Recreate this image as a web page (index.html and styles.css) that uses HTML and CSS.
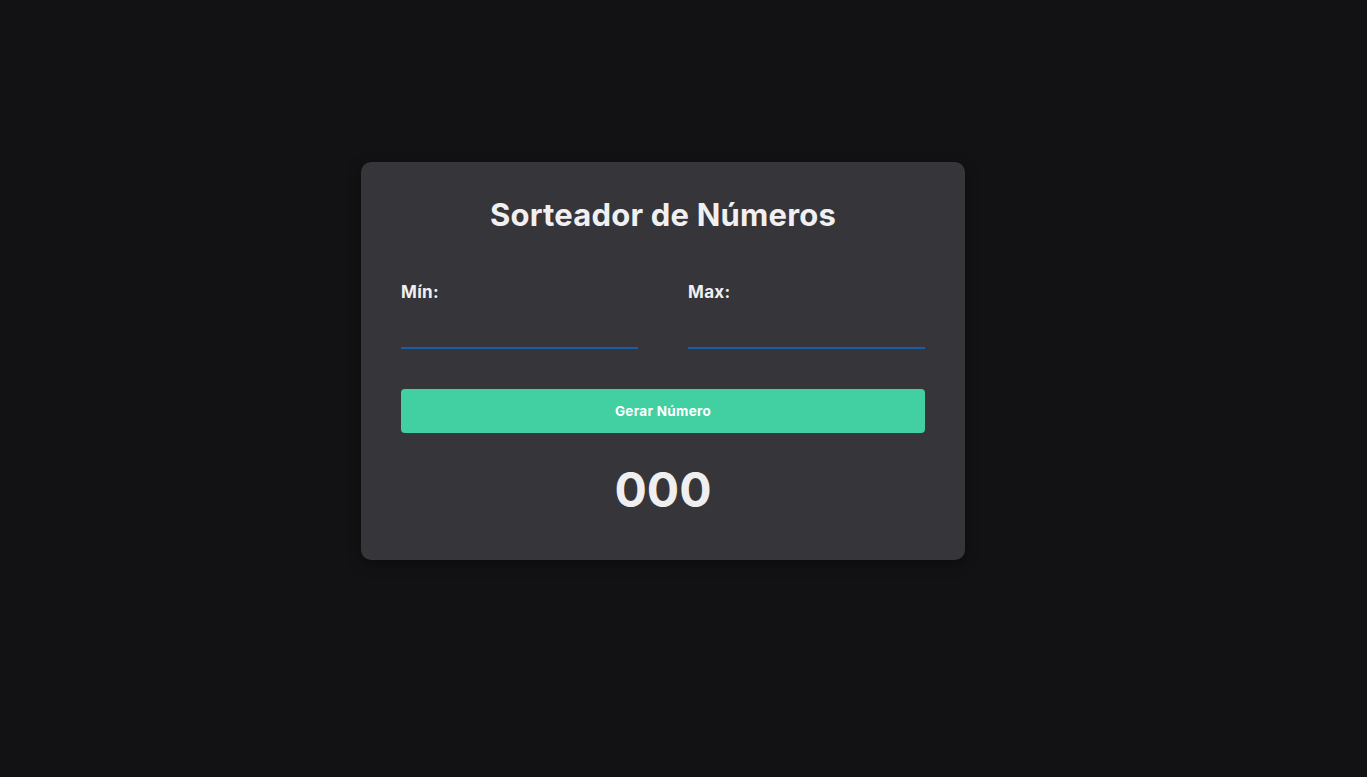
FILE: index.html
```html
<!DOCTYPE html>
<html lang="pt-BR">
<head>
<meta charset="utf-8">
<title>Sorteador de Números</title>
<link rel="stylesheet" href="styles.css">
</head>
<body>
<main class="page">
  <section class="card">
    <h1 class="title">Sorteador de Números</h1>
    <div class="fields">
      <div class="field">
        <label class="label" for="min">Mín:</label>
        <input class="input" id="min" type="number">
      </div>
      <div class="field">
        <label class="label" for="max">Max:</label>
        <input class="input" id="max" type="number">
      </div>
    </div>
    <button class="button" type="button">Gerar Número</button>
    <p class="result">000</p>
  </section>
</main>
</body>
</html>
```

FILE: styles.css
```css
* { box-sizing: border-box; }
html, body { margin: 0; padding: 0; }
body {
  background: #121214;
  font-family: "Inter", "Liberation Sans", sans-serif;
  color: #f0f0f2;
  min-height: 777px;
}
.page {
  display: flex;
  justify-content: center;
  padding-top: 162px;
  padding-right: 41px;
}
.card {
  width: 604px;
  background: #36353a;
  border-radius: 10px;
  padding: 35px 40px 40px;
  box-shadow: 0 4px 14px rgba(0, 0, 0, 0.35);
  display: flex;
  flex-direction: column;
}
.title {
  margin: 0;
  font-size: 31px;
  line-height: 36px;
  font-weight: 700;
  text-align: center;
  color: #f0f0f2;
  letter-spacing: 0.2px;
}
.fields {
  display: grid;
  grid-template-columns: 237px 237px;
  column-gap: 50px;
  margin-top: 47px;
}
.field {
  display: flex;
  flex-direction: column;
}
.label {
  font-size: 17px;
  line-height: 24px;
  font-weight: 700;
  color: #f0f0f2;
  letter-spacing: 0.3px;
}
.input {
  margin-top: 23px;
  height: 22px;
  background: transparent;
  border: none;
  border-bottom: 2px solid #1a5da6;
  outline: none;
  color: #f0f0f2;
  font: inherit;
  padding: 0;
}
.button {
  margin-top: 40px;
  height: 44px;
  border: none;
  border-radius: 4px;
  background: #42cfa2;
  color: #ffffff;
  font-family: inherit;
  font-size: 13.5px;
  font-weight: 700;
  letter-spacing: 0.3px;
  cursor: pointer;
}
.result {
  margin: 27px 0 0;
  text-align: center;
  font-size: 48px;
  line-height: 60px;
  font-weight: 700;
  color: #efeff1;
}
```
